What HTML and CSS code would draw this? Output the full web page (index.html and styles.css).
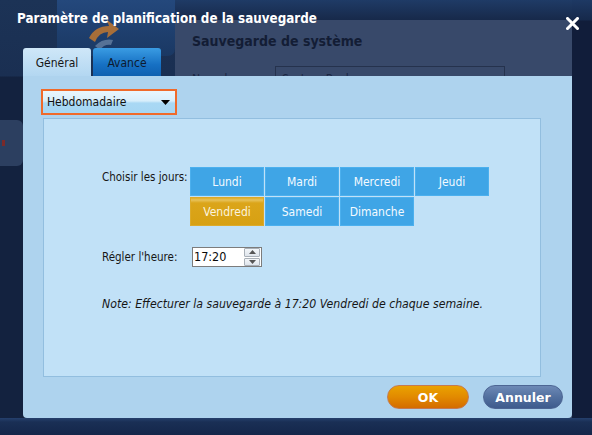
FILE: index.html
```html
<!DOCTYPE html>
<html lang="fr">
<head>
<meta charset="utf-8">
<title>Paramètre de planification de la sauvegarde</title>
<link rel="stylesheet" href="styles.css">
</head>
<body>
<div class="app">
  <div class="app-side"><div class="side-tab"><span class="side-mark"></span></div></div>
  <div class="app-logo">
    <svg class="logo" width="118" height="56" viewBox="0 0 118 56">
      <defs>
        <linearGradient id="lg" x1="0" y1="0" x2="0" y2="1">
          <stop offset="0" stop-color="#24487c"/>
          <stop offset="1" stop-color="#1a3863"/>
        </linearGradient>
      </defs>
      <path d="M0 0H118V48Q118 56 110 56H0Z" fill="url(#lg)"/>
      <path d="M32 38 Q38 26 52 26 L50 20 L62 29 L50 38 L51 32 Q42 32 38 42 Z" fill="#c97a2c" opacity="0.8"/>
      <path d="M38 46 Q46 38 56 40 L54 45 Q47 44 43 50 Z" fill="#8fa7c4" opacity="0.5"/>
    </svg>
  </div>
  <div class="app-main">
    <div class="app-strip"></div>
    <div class="app-window">
      <h2 class="app-title">Sauvegarde de système</h2>
      <div class="app-field"><span class="app-label">Nom de tâche</span><span class="app-input">System Backup</span></div>
    </div>
  </div>
  <div class="app-edge"></div>
</div>

<div class="dialog">
  <header class="dlg-head">
    <h1 class="dlg-title">Paramètre de planification de la sauvegarde</h1>
    <button class="close" aria-label="Fermer">
      <svg width="13" height="13" viewBox="0 0 13 13"><path d="M1.5 1.5L11.5 11.5M11.5 1.5L1.5 11.5" stroke="#fff" stroke-width="3" stroke-linecap="square"/></svg>
    </button>
  </header>
  <nav class="tabs">
    <span class="tab tab-active">Général</span>
    <span class="tab tab-other">Avancé</span>
  </nav>
  <section class="panel">
    <div class="select">
      <span>Hebdomadaire</span>
      <svg width="9" height="5" viewBox="0 0 9 5"><path d="M0 0H9L4.5 5Z" fill="#000"/></svg>
    </div>
    <div class="box">
      <div class="row days-row">
        <span class="label">Choisir les jours:</span>
        <div class="days">
          <span class="day">Lundi</span>
          <span class="day">Mardi</span>
          <span class="day">Mercredi</span>
          <span class="day">Jeudi</span>
          <span class="day day-on">Vendredi</span>
          <span class="day">Samedi</span>
          <span class="day">Dimanche</span>
        </div>
      </div>
      <div class="row time-row">
        <span class="label">Régler l'heure:</span>
        <div class="time">
          <span class="time-val">17:20</span>
          <span class="spin">
            <span class="spin-btn"><svg width="7" height="4" viewBox="0 0 7 4"><path d="M0 4H7L3.5 0Z" fill="#555"/></svg></span>
            <span class="spin-btn"><svg width="7" height="4" viewBox="0 0 7 4"><path d="M0 0H7L3.5 4Z" fill="#555"/></svg></span>
          </span>
        </div>
      </div>
      <p class="note">Note: Effecturer la sauvegarde à 17:20 Vendredi de chaque semaine.</p>
    </div>
    <div class="actions">
      <button class="btn btn-ok">OK</button>
      <button class="btn btn-cancel">Annuler</button>
    </div>
  </section>
  <div class="dlg-foot"></div>
</div>
</body>
</html>
```

FILE: styles.css
```css
* { box-sizing: border-box; }
html, body { margin: 0; padding: 0; }
body {
  width: 592px;
  height: 435px;
  overflow: hidden;
  position: relative;
  font-family: "DejaVu Sans Condensed", "DejaVu Sans", sans-serif;
  font-stretch: semi-condensed;
  font-size: 11.5px;
  color: #161616;
  background: #13213f;
}

/* background application */
.app {
  display: flex;
  width: 592px;
  height: 435px;
}
.app-side {
  width: 57px;
  background: linear-gradient(#1c3356 0, #1a2f52 76px, #13223f 77px);
  padding-top: 120px;
}
.side-tab {
  width: 23px;
  height: 46px;
  background: #2c3f60;
  border-radius: 0 6px 6px 0;
  display: flex;
  align-items: center;
}
.side-mark {
  width: 3px;
  height: 6px;
  margin-left: 2px;
  background: #7a2a2a;
}
.app-logo {
  width: 118px;
  background: linear-gradient(#1b3154 0, #1a2f52 76px, #13223f 77px);
}
.logo { display: block; }
.app-main {
  flex: 1;
  display: flex;
  flex-direction: column;
}
.app-strip {
  height: 20px;
  background: linear-gradient(#1f3b66, #17294a);
}
.app-window {
  flex: 1;
  background: #38496a;
  padding: 12px 0 0 17px;
}
.app-title {
  margin: 0;
  font-family: "DejaVu Sans Condensed", "DejaVu Sans", sans-serif;
  font-stretch: semi-condensed;
  font-size: 14px;
  font-weight: bold;
  color: #131d35;
  line-height: 18px;
}
.app-field {
  display: flex;
  margin-top: 16px;
  gap: 12px;
  color: #1a2642;
  font-size: 12px;
}
.app-label { padding-top: 6px; width: 71px; }
.app-input {
  width: 230px;
  height: 24px;
  border: 1px solid #25324d;
  padding: 5px 6px;
}
.app-edge {
  width: 20px;
  background: linear-gradient(#1e3964 0, #16294b 20px, #111d3a 21px);
}

/* dialog overlay */
.dialog {
  position: absolute;
  inset: 0;
  display: grid;
  grid-template-rows: 48px 28px 342px 17px;
  grid-template-columns: 23px 549px 20px;
}
.dlg-head {
  grid-column: 1 / 4;
  display: flex;
  align-items: flex-start;
  justify-content: space-between;
  padding: 10px 13px 0 17px;
}
.dlg-title {
  margin: 0;
  font-family: "DejaVu Sans Condensed", "DejaVu Sans", sans-serif;
  font-stretch: semi-condensed;
  font-size: 13.3px;
  font-weight: bold;
  color: #fff;
  line-height: 18px;
}
.close {
  margin-top: 7px;
  padding: 0;
  border: 0;
  background: none;
  display: flex;
}
.tabs {
  grid-column: 2;
  display: flex;
  gap: 2px;
}
.tab {
  width: 68px;
  height: 28px;
  border-radius: 3px 3px 0 0;
  display: flex;
  align-items: center;
  justify-content: center;
  font-size: 12px;
  padding-top: 1px;
}
.tab-active {
  background: linear-gradient(#cfe7f8, #b3d7f1);
  color: #161616;
}
.tab-other {
  background: linear-gradient(#3a9ce3, #1670c3 60%, #0f60b0);
  color: #0e1a2e;
}
.panel {
  grid-column: 2;
  background: #aed3ee;
  border-radius: 0 0 4px 4px;
  padding: 13px 9px 0 18px;
  display: flex;
  flex-direction: column;
}
.select {
  width: 136px;
  height: 26px;
  border: 2px solid #f06a2a;
  background: linear-gradient(#e9f6fd 0, #d8eefb 45%, #a9d8f4 55%, #a6d6f3 100%);
  display: flex;
  align-items: center;
  justify-content: space-between;
  padding: 0 5px 0 4px;
  font-size: 12px;
  color: #111;
}
.box {
  margin: 3px 0 0 2px;
  width: 498px;
  height: 259px;
  background: #c1e1f7;
  border: 1px solid #92bedf;
  padding: 48px 0 0 58px;
}
.row { display: flex; }
.label { width: 88px; flex: none; }
.days-row .label { padding-top: 3px; line-height: 14px; }
.days {
  display: grid;
  grid-template-columns: repeat(4, 74px);
  grid-auto-rows: 29px;
  gap: 1px;
}
.day {
  background: #3fa5e6;
  box-shadow: inset 0 0 0 1px #4cb0ee;
  color: #f4faff;
  display: flex;
  align-items: center;
  justify-content: center;
  font-size: 12px;
  padding-top: 1px;
}
.day-on {
  background: linear-gradient(#d9a313 0, #e7c25a 3px, #dba51a 6px, #d7a012 100%);
  box-shadow: inset 0 0 0 1px #dcaa2a;
  color: #fbf3de;
}
.time-row {
  margin-top: 21px;
  align-items: center;
}
.time-row .label { width: 90px; }
.time {
  display: flex;
  width: 70px;
  height: 20px;
  border: 1px solid #7c7c7c;
  background: #fff;
}
.time-val {
  flex: 1;
  font-size: 12.5px;
  line-height: 18px;
  padding-left: 1px;
  color: #0a0a0a;
}
.spin {
  width: 17px;
  display: flex;
  flex-direction: column;
  gap: 1px;
  padding: 0 1px 0 0;
  background: #fff;
}
.spin-btn {
  flex: 1;
  background: linear-gradient(#f3f6f9, #dfe5ec);
  border: 1px solid #a9b0b8;
  border-radius: 1px;
  display: flex;
  align-items: center;
  justify-content: center;
}
.note {
  margin: 30px 0 0 0;
  font-style: italic;
  font-size: 12.2px;
  line-height: 15px;
  color: #161616;
}
.actions {
  display: flex;
  justify-content: flex-end;
  gap: 14px;
  margin-top: 8px;
}
.btn {
  height: 24px;
  border-radius: 12px;
  font-family: "DejaVu Sans", sans-serif;
  font-stretch: normal;
  font-size: 12.5px;
  font-weight: bold;
  color: #fff;
  padding: 0;
  display: flex;
  align-items: center;
  justify-content: center;
}
.btn-ok {
  width: 82px;
  border: 1px solid #c47a52;
  background: linear-gradient(#eaa200, #e28a00 50%, #d46c00);
}
.btn-cancel {
  width: 80px;
  border: 1px solid #4d6694;
  background: linear-gradient(#6d89b6, #52709f 50%, #3e5b8d);
}
.dlg-foot {
  grid-column: 1 / 4;
  background: linear-gradient(#25406d, #1a2f55 4px, #14264a);
}
```
